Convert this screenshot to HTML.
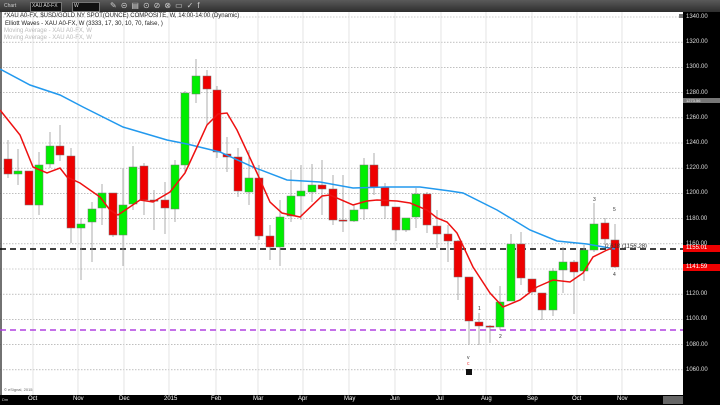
<!DOCTYPE html>
<html><head><meta charset="utf-8"><style>
html,body{margin:0;padding:0;width:720px;height:405px;overflow:hidden;background:#fff;font-family:"Liberation Sans",sans-serif}
#tb{position:absolute;left:0;top:0;width:720px;height:12px;background:linear-gradient(#5a5a5a,#2e2e2e)}
#ax{position:absolute;left:683px;top:12px;width:37px;height:393px;background:#000}
#bx{position:absolute;left:0;top:395px;width:720px;height:10px;background:#000}
.t{position:absolute;font-size:6px;white-space:nowrap}
</style></head><body>
<div id="tb"></div>
<div class="t" style="left:4px;top:3px;color:#ccc;font-size:5px">Chart</div>
<div style="position:absolute;left:30px;top:2px;width:30px;height:8px;background:#111;border:1px solid #777"></div>
<div class="t" style="left:32px;top:3px;color:#ddd;font-size:5px">XAU A0-FX</div>
<div style="position:absolute;left:72px;top:2px;width:26px;height:8px;background:#111;border:1px solid #777"></div>
<div class="t" style="left:74px;top:3px;color:#ddd;font-size:5px">W</div>
<div class="t" style="left:110px;top:1px;color:#ccc;font-size:8px;letter-spacing:4px">✎⊝▤⊙⊘⊗▭✓f</div>
<svg id="c" width="720" height="405" style="position:absolute;left:0;top:0"></svg>
<div id="ax"></div><div id="bx"></div>
<div class="t" style="left:4px;top:13px;color:#222">*XAU A0-FX, $USD/GOLD NY SPOT(OUNCE) COMPOSITE, W, 14:00-14:00 (Dynamic)</div>
<div class="t" style="left:5px;top:21px;color:#222">Elliott Waves - XAU A0-FX, W (3333, 17, 30, 10, 70, false, )</div>
<div class="t" style="left:4px;top:28px;color:#bbb">Moving Average - XAU A0-FX, W</div>
<div class="t" style="left:4px;top:35px;color:#bbb">Moving Average - XAU A0-FX, W</div>
<div class="t" style="left:4px;top:387px;color:#666;font-size:4px">© eSignal, 2015</div>
<div class="t" style="left:605px;top:244px;color:#333;font-style:italic">0.618 (1156.28)</div>
<div id="lbl"></div>
<script>
var s='',svg=document.getElementById('c');
function Y(p){return 17+(1340-p)*1.26;}
for(var p=1340;p>=1060;p-=20){var y=Y(p);s+='<line x1="0" x2="683" y1="'+y+'" y2="'+y+'" stroke="#999" stroke-width="0.6" stroke-dasharray="1.5,1.5"/>';}
var mx=[33,78,124,169,216,258,303,349,395,441,486,532,577,622];
mx.forEach(function(x){s+='<line x1="'+x+'" x2="'+x+'" y1="12" y2="395" stroke="#ddd" stroke-width="0.8"/>';});
s+='<line x1="1" x2="1" y1="12" y2="395" stroke="#444" stroke-width="1.5"/>';
s+='<line x1="0" x2="683" y1="249" y2="249" stroke="#000" stroke-width="1.6" stroke-dasharray="6,4"/>';
s+='<line x1="0" x2="683" y1="330" y2="330" stroke="#b040e0" stroke-width="1.6" stroke-dasharray="6,4"/>';
var C=[[8,159,174,140,178,0],[18,171,174,149,185,1],[29,171,205,171,205,0],[39,165,205,152,215,1],[50,146,164,132,168,1],[60,146,155,125,161,0],[71,156,228,148,243,0],[81,224,228,218,280,1],[92,209,222,202,262,1],[102,193,208,184,225,1],[113,193,235,193,237,0],[123,205,235,168,266,1],[133,167,204,146,210,1],[144,166,200,163,215,0],[154,200,201,190,230,0],[165,200,208,182,234,0],[175,165,209,160,222,1],[185,93,165,91,172,1],[196,76,94,59,103,1],[207,76,89,70,125,0],[217,90,152,86,158,0],[227,154,157,137,172,0],[238,157,191,148,197,0],[249,178,192,150,205,1],[259,178,236,165,240,0],[270,236,247,225,260,0],[280,217,247,200,266,1],[291,196,216,170,222,1],[301,191,196,165,220,1],[312,185,192,164,202,1],[322,185,189,160,215,0],[333,189,220,175,225,0],[343,220,221,175,232,0],[354,210,221,205,222,1],[364,165,209,158,220,1],[374,165,187,153,195,0],[385,187,206,183,219,0],[396,207,230,207,241,0],[406,218,230,218,232,1],[416,194,217,188,228,1],[427,194,225,192,233,0],[437,226,234,210,248,0],[448,234,241,225,262,0],[458,241,277,240,300,0],[469,277,321,277,345,0],[479,322,326,313,345,0],[490,326,327,325,343,0],[500,302,327,286,330,1],[511,244,301,234,301,1],[521,244,278,232,285,0],[532,279,292,279,295,0],[542,293,310,293,320,0],[553,271,310,268,316,1],[563,262,270,247,293,1],[574,262,272,260,314,0],[584,250,271,245,281,1],[594,224,250,203,252,1],[605,223,239,218,245,0],[615,240,267,224,268,0]];
C.forEach(function(c){s+='<line x1="'+c[0]+'" x2="'+c[0]+'" y1="'+c[3]+'" y2="'+c[4]+'" stroke="#999" stroke-width="0.8"/>';var h=Math.max(c[2]-c[1],1.2);s+='<rect x="'+(c[0]-4)+'" y="'+c[1]+'" width="8" height="'+h+'" fill="'+(c[5]?'#00ee00':'#ee0000')+'" stroke="#777" stroke-width="0.5"/>';});
var R=[[0,110],[20,135],[33,167],[47,173],[60,168],[67,177],[80,183],[100,197],[110,210],[118,215],[140,200],[153,202],[170,192],[185,173],[197,147],[207,125],[218,114],[227,113],[237,130],[257,173],[270,202],[282,213],[300,217],[322,196],[330,195],[353,205],[367,201],[377,200],[397,201],[410,203],[427,210],[437,218],[447,222],[457,233],[473,267],[490,293],[503,307],[520,300],[537,287],[553,280],[570,282],[583,273],[593,257],[607,250],[612,248]];
var B=[[0,69],[30,85],[60,95],[83,107],[123,127],[167,140],[187,144],[220,152],[253,167],[287,180],[320,182],[353,188],[387,187],[420,187],[450,191],[463,193],[497,210],[530,230],[557,241],[587,244],[615,249]];
function pl(a,col){return '<polyline points="'+a.map(function(p){return p.join(',')}).join(' ')+'" fill="none" stroke="'+col+'" stroke-width="1.5"/>';}
s+=pl(B,'#2299ee')+pl(R,'#ee1111');
s+='<rect x="679" y="14" width="4" height="4" fill="#777"/>';
svg.innerHTML=s;
var L='';
for(var p=1340;p>=1060;p-=20){L+='<div class="t" style="left:686px;top:'+(Y(p)-3)+'px;color:#ddd">'+p+'.00</div>';}
L+='<div style="position:absolute;left:683px;top:98px;width:37px;height:5px;background:#777"></div><div class="t" style="left:686px;top:98px;color:#eee;font-size:4px">1273.56</div>';
L+='<div style="position:absolute;left:683px;top:245px;width:37px;height:7px;background:#e00"></div><div class="t" style="left:686px;top:245px;color:#fff">1155.01</div>';
L+='<div style="position:absolute;left:683px;top:264px;width:37px;height:7px;background:#e00"></div><div class="t" style="left:686px;top:264px;color:#fff">1141.59</div>';
var M=['Oct','Nov','Dec','2015','Feb','Mar','Apr','May','Jun','Jul','Aug','Sep','Oct','Nov'];
M.forEach(function(m,i){L+='<div class="t" style="left:'+(mx[i]-5)+'px;top:396px;color:#fff">'+m+'</div>';});
L+='<div class="t" style="left:2px;top:397px;color:#ccc;font-size:4px">Dm</div><div style="position:absolute;left:663px;top:396px;width:20px;height:8px;background:#666"></div>';
L+='<div class="t" style="left:593px;top:197px;color:#333;font-size:5px">3</div><div class="t" style="left:613px;top:207px;color:#333;font-size:5px">5</div><div class="t" style="left:613px;top:272px;color:#333;font-size:5px">4</div><div class="t" style="left:478px;top:306px;color:#333;font-size:5px">1</div><div class="t" style="left:499px;top:334px;color:#333;font-size:5px">2</div><div class="t" style="left:467px;top:355px;color:#333;font-size:5px">v</div><div class="t" style="left:467px;top:361px;color:#e44;font-size:5px">c</div><div style="position:absolute;left:466px;top:369px;width:6px;height:6px;background:#111"></div>';
document.getElementById('lbl').innerHTML=L;
</script>
</body></html>
